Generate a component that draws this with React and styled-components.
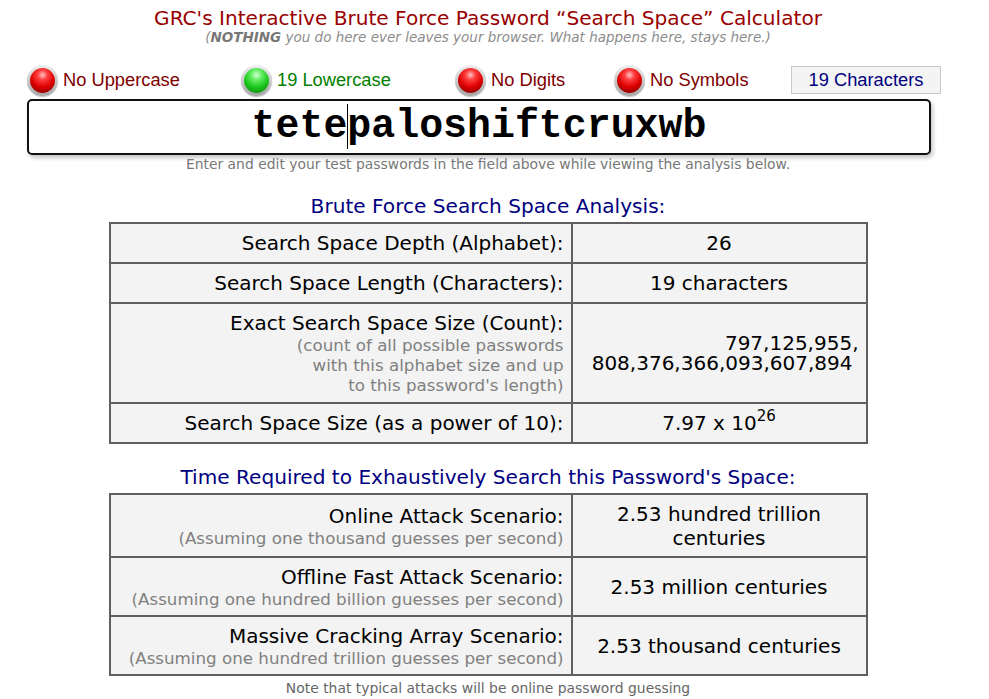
import React from 'react';
import styled, { createGlobalStyle } from 'styled-components';

const TAHOMA = "Tahoma, 'DejaVu Sans', sans-serif";
const ARIAL = "Arial, 'Liberation Sans', sans-serif";
const COURIER = "'Courier New', 'Liberation Mono', monospace";

const COLORS = {
  title: '#990000',
  navy: '#000080',
  red: '#800000',
  green: '#008000',
  gray: '#808080',
  cell: '#f3f3f3',
  border: '#5f5f5f',
};

const GlobalStyle = createGlobalStyle`
  body {
    margin: 0;
    background: #fff;
    font-family: ${TAHOMA};
  }
`;

const Page = styled.div`
  width: 976px;
  padding-top: 6px;
`;

const Title = styled.h1`
  margin: 0;
  font-family: ${TAHOMA};
  font-weight: normal;
  font-size: 20.1px;
  line-height: 24px;
  color: ${COLORS.title};
  text-align: center;
`;

const Subtitle = styled.div`
  font-size: 13.5px;
  line-height: 16px;
  font-style: italic;
  color: #8c8c8c;
  text-align: center;
  margin-top: -1px;
  b { color: #777; }
`;

const Indicators = styled.div`
  display: grid;
  grid-template-columns: 214px 214px 159px 177px auto;
  align-items: center;
  margin: 18px 0 2px 27px;
  height: 34px;
`;

const Indicator = styled.div`
  display: flex;
  align-items: center;
  gap: 5px;
  font-family: ${ARIAL};
  font-size: 18.3px;
  color: ${p => (p.$on ? COLORS.green : COLORS.red)};
`;

const Bezel = styled.span`
  width: 31px;
  height: 31px;
  border-radius: 50%;
  box-sizing: border-box;
  padding: 3px;
  background: linear-gradient(#efefef, #a5a5a5);
  box-shadow: 0 1px 1px rgba(0, 0, 0, 0.25);
  display: flex;
`;

const Ball = styled.span`
  flex: 1;
  border-radius: 50%;
  background: ${p =>
    p.$on
      ? 'radial-gradient(circle at 50% 28%, #d6ffd6 0%, #6cf06c 22%, #1ec81e 55%, #0a7a0a 100%)'
      : 'radial-gradient(circle at 50% 28%, #ffc4c4 0%, #ff4040 22%, #dd0000 55%, #700000 100%)'};
`;

const CountBox = styled.div`
  width: 150px;
  height: 28px;
  box-sizing: border-box;
  border: 1px solid #c8c8c8;
  background: #f4f4f4;
  font-family: ${ARIAL};
  font-size: 18.3px;
  line-height: 26px;
  color: ${COLORS.navy};
  text-align: center;
`;

const PasswordField = styled.div`
  margin-left: 27px;
  width: 904px;
  height: 56px;
  box-sizing: border-box;
  border: 2px solid #111;
  border-radius: 5px;
  box-shadow: 2px 3px 4px rgba(0, 0, 0, 0.22);
  display: flex;
  align-items: center;
  justify-content: center;
  font-family: ${COURIER};
  font-weight: bold;
  font-size: 39.9px;
  color: #000;
`;

const Caret = styled.span`
  display: inline-block;
  width: 0;
  height: 45px;
  border-left: 1px solid #000;
  margin-right: -1px;
  vertical-align: middle;
`;

const Hint = styled.div`
  font-size: 13.9px;
  line-height: 16px;
  color: #777;
  text-align: center;
  margin-top: 1px;
`;

const Heading = styled.h2`
  margin: ${p => p.$top}px 0 4px;
  font-weight: normal;
  font-size: 20.1px;
  line-height: 24px;
  color: ${COLORS.navy};
  text-align: center;
`;

const Table = styled.table`
  margin: 0 auto;
  width: 759px;
  border-collapse: collapse;
  border: 2px solid ${COLORS.border};
`;

const Label = styled.td`
  width: 446px;
  background: ${COLORS.cell};
  border: 2px solid ${COLORS.border};
  padding: ${p => p.$pad}px 7px;
  text-align: right;
  font-size: 20px;
  line-height: 24px;
  color: #000;
  vertical-align: middle;
`;

const Value = styled.td`
  background: ${COLORS.cell};
  border: 2px solid ${COLORS.border};
  padding: ${p => p.$pad}px 7px;
  text-align: ${p => p.$align || 'center'};
  font-size: 20px;
  line-height: 24px;
  color: #000;
  vertical-align: middle;
`;

const Sub = styled.div`
  font-size: 16.7px;
  line-height: 20px;
  color: ${COLORS.gray};
`;

const NumLine = styled.div`
  line-height: 20px;
  padding-right: ${p => p.$indent || 0}px;
`;

const Sup = styled.sup`
  font-size: 15px;
  line-height: 0;
  vertical-align: 9px;
`;

const Note = styled.div`
  font-size: 13.9px;
  line-height: 16px;
  color: #666;
  text-align: center;
  margin-top: 4px;
`;

const indicators = [
  { on: false, text: 'No Uppercase' },
  { on: true, text: '19 Lowercase' },
  { on: false, text: 'No Digits' },
  { on: false, text: 'No Symbols' },
];

const scenarios = [
  {
    name: 'Online Attack Scenario:',
    rate: '(Assuming one thousand guesses per second)',
    time: ['2.53 hundred trillion', 'centuries'],
  },
  {
    name: 'Offline Fast Attack Scenario:',
    rate: '(Assuming one hundred billion guesses per second)',
    time: ['2.53 million centuries'],
  },
  {
    name: 'Massive Cracking Array Scenario:',
    rate: '(Assuming one hundred trillion guesses per second)',
    time: ['2.53 thousand centuries'],
  },
];

export default function App() {
  return (
    <Page>
      <GlobalStyle />
      <Title>GRC's Interactive Brute Force Password “Search Space” Calculator</Title>
      <Subtitle>
        (<b>NOTHING</b> you do here ever leaves your browser. What happens here, stays here.)
      </Subtitle>

      <Indicators>
        {indicators.map(i => (
          <Indicator key={i.text} $on={i.on}>
            <Bezel>
              <Ball $on={i.on} />
            </Bezel>
            {i.text}
          </Indicator>
        ))}
        <CountBox>19 Characters</CountBox>
      </Indicators>

      <PasswordField>
        <span>
          tete<Caret />paloshiftcruxwb
        </span>
      </PasswordField>
      <Hint>Enter and edit your test passwords in the field above while viewing the analysis below.</Hint>

      <Heading $top={22}>Brute Force Search Space Analysis:</Heading>
      <Table>
        <tbody>
          <tr>
            <Label $pad={7}>Search Space Depth (Alphabet):</Label>
            <Value $pad={7}>26</Value>
          </tr>
          <tr>
            <Label $pad={7}>Search Space Length (Characters):</Label>
            <Value $pad={7}>19 characters</Value>
          </tr>
          <tr>
            <Label $pad={7}>
              Exact Search Space Size (Count):
              <Sub>
                (count of all possible passwords
                <br />
                with this alphabet size and up
                <br />
                to this password's length)
              </Sub>
            </Label>
            <Value $pad={7} $align="right">
              <NumLine>797,125,955,</NumLine>
              <NumLine $indent={6}>808,376,366,093,607,894</NumLine>
            </Value>
          </tr>
          <tr>
            <Label $pad={7}>Search Space Size (as a power of 10):</Label>
            <Value $pad={7}>
              7.97 x 10<Sup>26</Sup>
            </Value>
          </tr>
        </tbody>
      </Table>

      <Heading $top={21}>Time Required to Exhaustively Search this Password's Space:</Heading>
      <Table>
        <tbody>
          {scenarios.map(s => (
            <tr key={s.name}>
              <Label $pad={6.5}>
                {s.name}
                <Sub>{s.rate}</Sub>
              </Label>
              <Value $pad={6.5}>
                {s.time.map(t => (
                  <div key={t}>{t}</div>
                ))}
              </Value>
            </tr>
          ))}
        </tbody>
      </Table>
      <Note>Note that typical attacks will be online password guessing</Note>
    </Page>
  );
}
